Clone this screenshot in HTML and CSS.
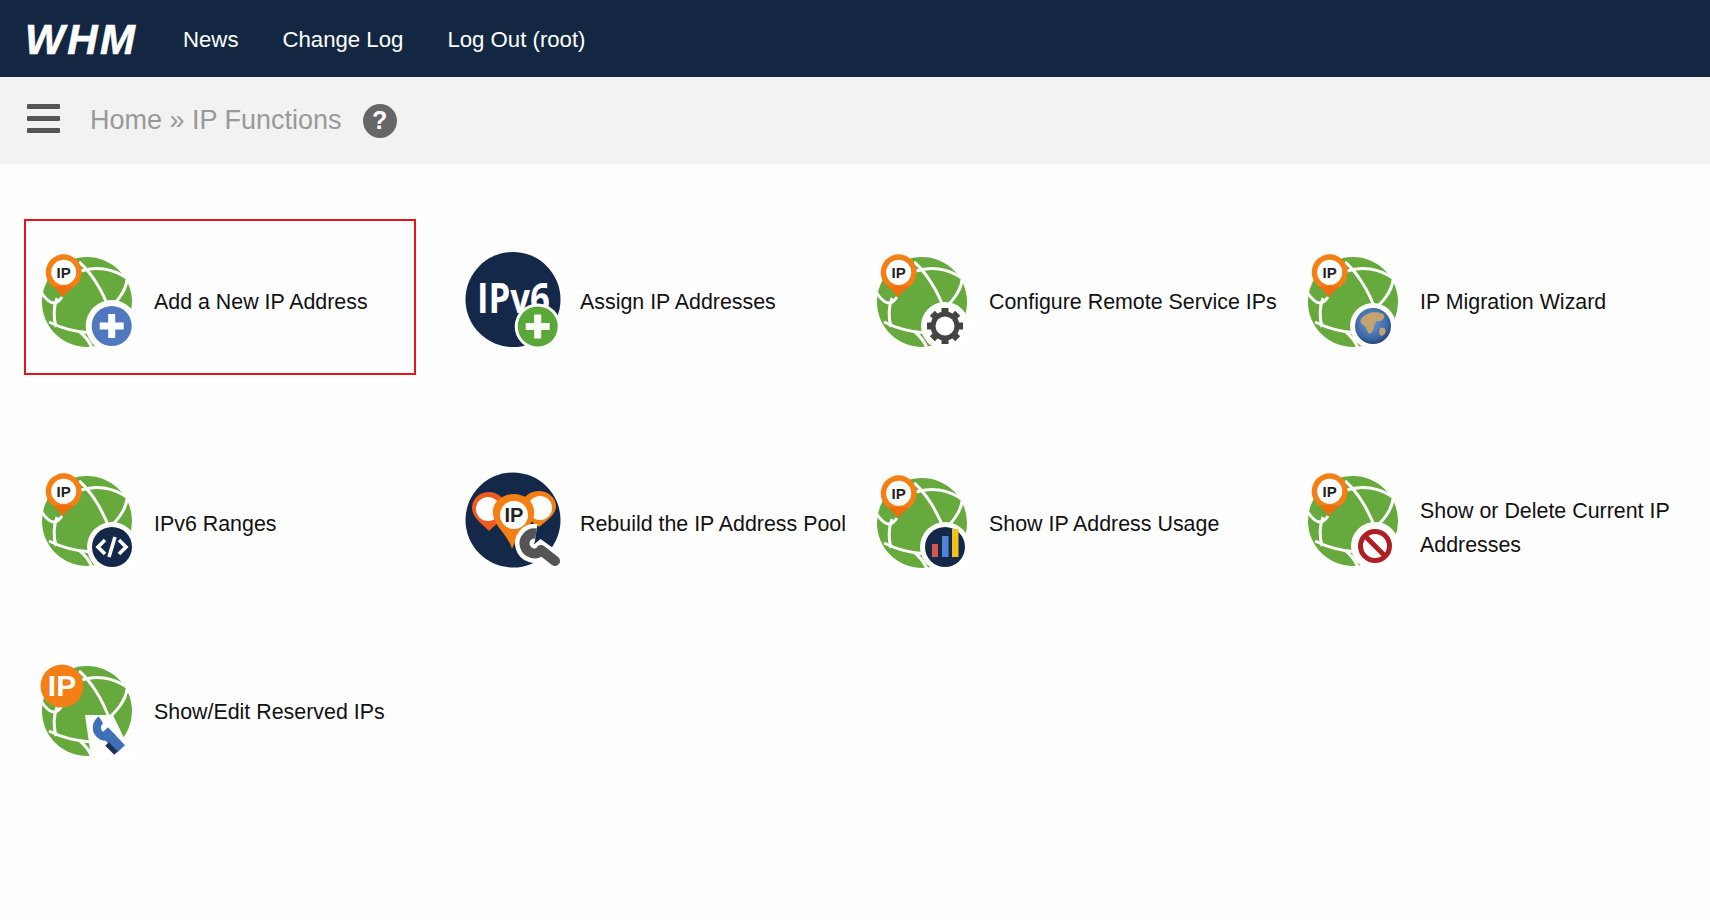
FILE: index.html
```html
<!DOCTYPE html>
<html lang="en">
<head>
<meta charset="utf-8">
<title>WHM - IP Functions</title>
<link rel="stylesheet" href="styles.css">
</head>
<body>
<svg class="defs" aria-hidden="true">
  <defs>
    <symbol id="globe" viewBox="0 0 92 92">
      <circle cx="46" cy="46" r="45" fill="#66a93c"/>
      <g class="net">
        <path d="M38 6C48 14 62 34 69 56"/>
        <path d="M40 15C54 10 72 12 87 23"/>
        <path d="M86 24C85 34 76 48 63 56"/>
        <path d="M0 36C4 42 9 47 13 47C16 47 19 44 21 41"/>
        <path d="M16 42C13 50 12 60 15 71"/>
        <path d="M8 66C20 72 34 76 50 77"/>
        <path d="M39 76C44 80 48 85 51 92"/>
      </g>
    </symbol>
    <symbol id="pin" viewBox="0 0 92 92">
      <circle cx="22.700" cy="16.300" r="18" fill="#f47f14"/>
      <path d="M12 30L21.700 40.700L33 30Z" fill="#ee6f12"/>
      <circle cx="22.700" cy="16.300" r="12.500" fill="#fff"/>
      <text class="pin-text" x="22.700" y="21.500">IP</text>
    </symbol>
    <radialGradient id="earth" cx="45%" cy="40%" r="65%">
      <stop offset="0" stop-color="#6f97d2"/>
      <stop offset="0.7" stop-color="#3b68a8"/>
      <stop offset="1" stop-color="#1d3a68"/>
    </radialGradient>
  </defs>
</svg>

<header class="topbar">
  <span class="logo">WHM</span>
  <nav class="topnav">
    <a href="#">News</a>
    <a href="#">Change Log</a>
    <a href="#">Log Out (root)</a>
  </nav>
</header>

<div class="crumbbar">
  <span class="burger"><i></i><i></i><i></i></span>
  <span class="crumbs">Home » IP Functions</span>
  <span class="help">?</span>
</div>

<main class="tools">
  <a class="tool selected" href="#">
    <svg class="icon" viewBox="0 0 92 92">
      <use href="#globe"/>
      <circle cx="70.700" cy="70" r="26" fill="#fff"/>
      <circle cx="70.700" cy="70" r="20" fill="#4f78bf"/>
      <path class="plus" d="M70.700 58V82M58.700 70H82.700"/>
      <use href="#pin"/>
    </svg>
    <span class="label">Add a New IP Address</span>
  </a>

  <a class="tool" href="#">
    <svg class="icon" viewBox="0 0 92 92">
      <circle cx="46" cy="43.500" r="47.500" fill="#14294a"/>
      <text class="ipv6" x="10" y="57" textLength="73" lengthAdjust="spacingAndGlyphs">IPv6</text>
      <circle cx="70.700" cy="70.500" r="23" fill="#fff"/>
      <circle cx="70.700" cy="70.500" r="20" fill="#5aa83a"/>
      <path class="plus" d="M70.700 58.500V82.500M58.700 70.500H82.700"/>
    </svg>
    <span class="label">Assign IP Addresses</span>
  </a>

  <a class="tool" href="#">
    <svg class="icon" viewBox="0 0 92 92">
      <use href="#globe"/>
      <circle cx="69" cy="70" r="24" fill="#fff"/>
      <g class="gear">
        <circle cx="69" cy="70" r="14.500"/>
        <path d="M69 52V88M51 70H87M56.300 57.300L81.700 82.700M81.700 57.300L56.300 82.700"/>
      </g>
      <circle cx="69" cy="70" r="9.500" fill="#fff"/>
      <use href="#pin"/>
    </svg>
    <span class="label">Configure Remote Service IPs</span>
  </a>

  <a class="tool" href="#">
    <svg class="icon" viewBox="0 0 92 92">
      <use href="#globe"/>
      <circle cx="66" cy="70" r="23" fill="#fff"/>
      <circle cx="66" cy="70" r="18" fill="url(#earth)"/>
      <path d="M55 62C60 56 70 55 76 58C80 62 74 66 70 65C66 68 68 74 63 78C59 76 60 70 56 69C53 67 53 64 55 62Z" fill="#c4a46e"/>
      <path d="M73 72C77 71 80 73 78 77C76 81 73 80 72 77Z" fill="#c4a46e"/>
      <use href="#pin"/>
    </svg>
    <span class="label">IP Migration Wizard</span>
  </a>

  <a class="tool" href="#">
    <svg class="icon lift-6" viewBox="0 0 92 92">
      <use href="#globe"/>
      <circle cx="71" cy="72" r="25" fill="#fff"/>
      <circle cx="71" cy="72" r="20" fill="#14294a"/>
      <path class="code" d="M64 65L57 72L64 79M78 65L85 72L78 79M74 62L68 82"/>
      <use href="#pin"/>
    </svg>
    <span class="label">IPv6 Ranges</span>
  </a>

  <a class="tool" href="#">
    <svg class="icon lift-10" viewBox="0 0 92 92">
      <circle cx="46" cy="47" r="47.500" fill="#14294a"/>
      <path d="M22 58C12 48 5 44 5 34C6 24 14 19 22 19C30 19 39 25 39 35C39 46 30 50 22 58Z" fill="#ef5a1e"/>
      <circle cx="21" cy="36" r="12" fill="#fff"/>
      <path d="M72 54C62 46 55 42 55 33C55 23 64 18 72 18C80 18 89 24 89 33C89 42 80 47 72 54Z" fill="#f47f14"/>
      <circle cx="73" cy="35" r="12" fill="#fff"/>
      <path d="M45 76C41 62 28 54 26 42C24 30 35 21 47 21C59 21 69 30 67 43C65 54 50 62 45 76Z" fill="#f47f14"/>
      <circle cx="47" cy="42" r="14" fill="#fff"/>
      <text class="pin-text big" x="47" y="49">IP</text>
      <path class="wrench-halo" d="M69 60.500A10 10 0 1 0 74 78L89 89"/>
      <path class="wrench" d="M69 60.500A10 10 0 1 0 74 78"/>
      <path class="wrench handle" d="M74 77L88 88"/>
    </svg>
    <span class="label">Rebuild the IP Address Pool</span>
  </a>

  <a class="tool" href="#">
    <svg class="icon lift-2" viewBox="0 0 92 92">
      <use href="#globe"/>
      <circle cx="69" cy="70" r="25" fill="#fff"/>
      <circle cx="69" cy="70" r="20" fill="#14294a"/>
      <rect x="56" y="67" width="6" height="13" fill="#d9534f"/>
      <rect x="66" y="59" width="6.500" height="21" fill="#4f83d6"/>
      <rect x="76" y="52" width="6.500" height="28" fill="#f2c21a"/>
      <use href="#pin"/>
    </svg>
    <span class="label">Show IP Address Usage</span>
  </a>

  <a class="tool" href="#">
    <svg class="icon lift-6" viewBox="0 0 92 92">
      <use href="#globe"/>
      <circle cx="68" cy="71" r="24" fill="#fff"/>
      <circle class="nosign" cx="68" cy="71" r="14.500"/>
      <path class="nosign" d="M58 61L78 81"/>
      <use href="#pin"/>
    </svg>
    <span class="label two-line">Show or Delete Current IP Addresses</span>
  </a>

  <a class="tool" href="#">
    <svg class="icon lift-2" viewBox="0 0 92 92">
      <use href="#globe"/>
      <path d="M44 50H72L92 92H50Z" fill="#fff"/>
      <path class="wrench-blue" d="M60 55A9 9 0 1 0 72 68"/>
      <path class="wrench-blue handle" d="M63 66L80 84"/>
      <path class="wrench-dark" d="M66 79L75 88"/>
      <circle cx="21" cy="21" r="21.500" fill="#f47f14"/>
      <text class="ip-big" x="21" y="31">IP</text>
    </svg>
    <span class="label">Show/Edit Reserved IPs</span>
  </a>
</main>
</body>
</html>
```
FILE: styles.css
```css
* { box-sizing: border-box; }
html, body { margin: 0; height: 100%; }
body {
  background: #fefefe;
  color: #111;
  font-family: "Liberation Sans", Arial, sans-serif;
  overflow: hidden;
}
a { color: inherit; text-decoration: none; }
.defs { position: absolute; width: 0; height: 0; }
symbol { overflow: visible; }

.topbar {
  display: flex;
  align-items: center;
  height: 77px;
  padding: 2px 0 0 25px;
  background: #132742;
  color: #fff;
}
.logo {
  width: 115px;
  font-size: 42px;
  font-weight: 700;
  font-style: italic;
  line-height: 1;
  letter-spacing: 2.5px;
  white-space: nowrap;
  -webkit-text-stroke: 0.6px #fff;
}
.topnav {
  display: flex;
  gap: 44px;
  margin-left: 43px;
  font-size: 22.2px;
}

.crumbbar {
  display: flex;
  align-items: center;
  height: 87px;
  padding-left: 27px;
  background: #f2f2f2;
}
.burger {
  display: flex;
  flex-direction: column;
  gap: 7px;
  width: 33px;
  margin-bottom: 4px;
}
.burger i {
  display: block;
  height: 5px;
  border-radius: 1px;
  background: #555;
}
.crumbs {
  margin-left: 30px;
  font-size: 27px;
  color: #999;
}
.help {
  display: flex;
  align-items: center;
  justify-content: center;
  width: 34px;
  height: 34px;
  margin-left: 21px;
  border-radius: 50%;
  background: #666;
  color: #fff;
  font-size: 25px;
  font-weight: 700;
}

.tools {
  display: grid;
  grid-template-columns: 426px 409px 431px 400px;
  grid-template-rows: 222px 188.5px 156px;
  padding: 55px 0 0 24px;
}
.tool {
  display: flex;
  align-items: center;
  gap: 21px;
  height: 156px;
  padding: 9px 0 0 17px;
  font-size: 21.4px;
  line-height: 34px;
}
.tool.selected {
  width: 392px;
  border: 2px solid #e8141c;
  padding-left: 15px;
}
.icon {
  flex: none;
  width: 92px;
  height: 92px;
  overflow: visible;
}
.lift-2 { margin-bottom: 2px; }
.lift-6 { margin-bottom: 6px; }
.lift-10 { margin-bottom: 10px; }
.label { max-width: 292px; }
.label.two-line {
  max-width: 270px;
  padding-top: 8px;
}

.net path {
  fill: none;
  stroke: #fff;
  stroke-width: 3;
}
.pin-text {
  fill: #222;
  font: 700 15px "Liberation Sans", Arial, sans-serif;
  text-anchor: middle;
}
.pin-text.big { font-size: 20px; }
.ip-big {
  fill: #fff;
  font: 700 30px "Liberation Sans", Arial, sans-serif;
  text-anchor: middle;
}
.ipv6 {
  fill: #fff;
  font: 700 42px "Open Sans", "Liberation Sans", sans-serif;
}
.plus {
  fill: none;
  stroke: #fff;
  stroke-width: 7;
}
.gear circle {
  fill: #444;
}
.gear path {
  fill: none;
  stroke: #444;
  stroke-width: 7;
}
.code {
  fill: none;
  stroke: #fff;
  stroke-width: 3.6;
}
.nosign {
  fill: none;
  stroke: #ae1f24;
  stroke-width: 5;
}
.wrench {
  fill: none;
  stroke: #555;
  stroke-width: 10;
}
.wrench.handle {
  stroke-width: 10;
  stroke-linecap: round;
}
.wrench-halo {
  fill: none;
  stroke: #fff;
  stroke-width: 19;
}
.wrench-blue {
  fill: none;
  stroke: #3f6fb8;
  stroke-width: 8;
}
.wrench-blue.handle { stroke-width: 11; }
.wrench-dark {
  fill: none;
  stroke: #1e3050;
  stroke-width: 5;
}
```
